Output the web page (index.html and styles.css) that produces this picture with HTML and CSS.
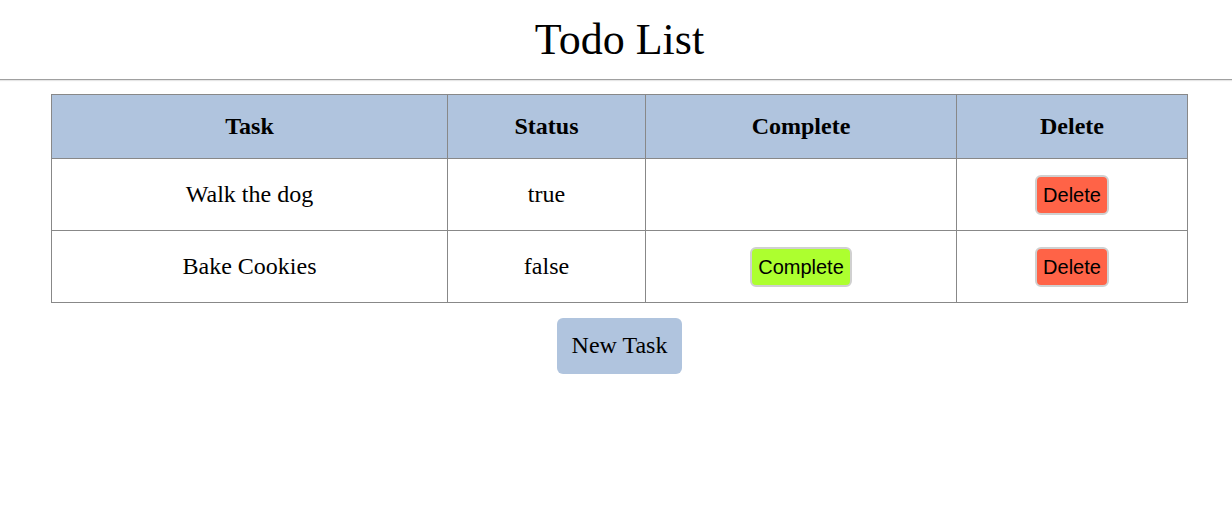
FILE: index.html
```html
<!DOCTYPE html>
<html>
<head>
<meta charset="utf-8">
<title>Todo List</title>
<link rel="stylesheet" href="styles.css">
</head>
<body>
<header class="top">
  <h1 class="title">Todo List</h1>
</header>
<main class="main">
  <table class="todo">
    <thead>
      <tr>
        <th class="c-task">Task</th>
        <th class="c-status">Status</th>
        <th class="c-complete">Complete</th>
        <th class="c-delete">Delete</th>
      </tr>
    </thead>
    <tbody>
      <tr>
        <td>Walk the dog</td>
        <td>true</td>
        <td></td>
        <td><button class="btn btn-delete">Delete</button></td>
      </tr>
      <tr>
        <td>Bake Cookies</td>
        <td>false</td>
        <td><button class="btn btn-complete">Complete</button></td>
        <td><button class="btn btn-delete">Delete</button></td>
      </tr>
    </tbody>
  </table>
  <div class="actions">
    <button class="new-task">New Task</button>
  </div>
</main>
</body>
</html>
```
FILE: styles.css
```css
html, body {
  margin: 0;
  padding: 0;
  background: #fff;
}
body {
  font-family: "Liberation Serif", "Times New Roman", serif;
  color: #000;
}
.top {
  border-bottom: 1px solid #a0a0a0;
  box-shadow: 0 1px 1px #e6e6e6;
  padding: 0 0 0 7px;
}
.title {
  margin: 0;
  padding: 14px 0 14px;
  font-size: 44px;
  font-weight: normal;
  text-align: center;
  line-height: 51px;
}
.main {
  padding: 14px 0 0 7px;
}
.todo {
  width: 1137px;
  margin: 0 auto;
  border-collapse: collapse;
  font-size: 24px;
}
.todo th,
.todo td {
  border: 1px solid #888;
  text-align: center;
}
.todo th {
  background: #b0c4de;
  height: 63px;
  padding: 0;
  font-weight: bold;
  font-size: 24px;
}
.todo td {
  height: 71px;
  padding: 0;
  font-size: 24px;
}
.c-task { width: 395px; }
.c-status { width: 197px; }
.c-complete { width: 310px; }
.btn {
  font-family: "Liberation Sans", Arial, sans-serif;
  font-size: 20px;
  line-height: 22px;
  padding: 7px 6px;
  border: 2px solid #d0d0d0;
  border-radius: 6px;
  color: #000;
  cursor: pointer;
  vertical-align: middle;
}
.btn-delete { background: #ff6347; }
.btn-complete { background: #adff2f; }
.actions {
  display: flex;
  justify-content: center;
  padding-top: 15px;
}
.new-task {
  font-family: "Liberation Serif", "Times New Roman", serif;
  font-size: 24px;
  line-height: 27px;
  padding: 14px 15px 15px;
  border: none;
  border-radius: 6px;
  background: #b0c4de;
  color: #000;
}
```
